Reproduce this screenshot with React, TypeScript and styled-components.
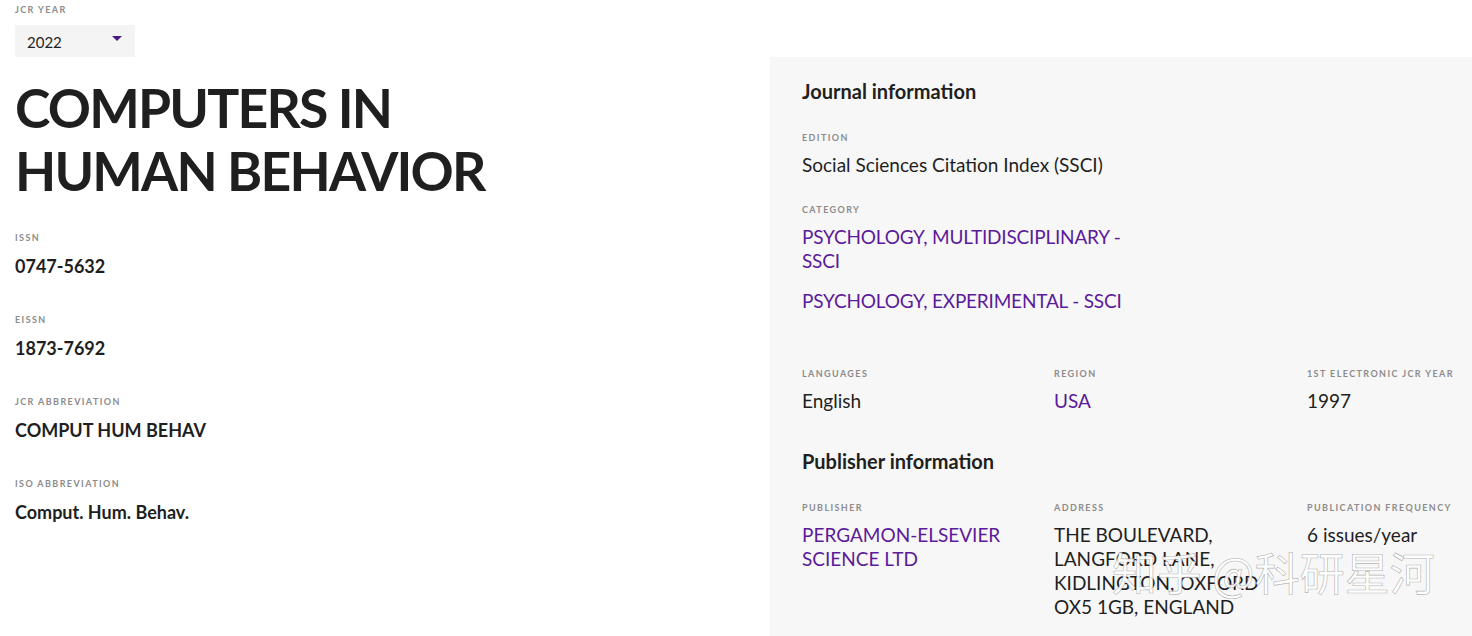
import React from "react";
import styled, { createGlobalStyle } from "styled-components";

const Global = createGlobalStyle`
  html, body { margin: 0; padding: 0; background: #fff; }
  body { font-family: Lato, "Noto Sans", sans-serif; color: #1f1f1f; }
  * { box-sizing: border-box; }
`;

const Page = styled.div`
  position: relative;
  display: grid;
  grid-template-columns: 770px 702px;
  width: 1472px;
  height: 636px;
  overflow: hidden;
`;

const Left = styled.div`
  padding: 4px 0 0 15px;
  display: flex;
  flex-direction: column;
`;

const Label = styled.div`
  font-size: 9px;
  font-weight: 700;
  letter-spacing: 1.4px;
  text-transform: uppercase;
  color: #8c8c8c;
  line-height: 12px;
`;

const Select = styled.div`
  margin-top: 9px;
  width: 120px;
  height: 32px;
  background: #f4f4f4;
  display: flex;
  align-items: center;
  justify-content: space-between;
  padding: 2px 13px 0 12px;
  font-size: 15px;
  color: #1f1f1f;
`;

const Caret = styled.span`
  width: 0;
  height: 0;
  border-left: 5px solid transparent;
  border-right: 5px solid transparent;
  border-top: 5px solid #4b1a8a;
  margin-top: -8px;
`;

const Title = styled.h1`
  margin: 19px 0 30px 0;
  font-size: 53.5px;
  line-height: 63px;
  font-weight: 700;
  letter-spacing: -1.8px;
  color: #1f1f1f;
`;

const Field = styled.div`
  display: flex;
  flex-direction: column;
  gap: 10px;
  margin-bottom: 36px;
`;

const BoldValue = styled.div`
  font-size: 18px;
  font-weight: 700;
  line-height: 24px;
  color: #1f1f1f;
`;

const Right = styled.div`
  margin-top: 57px;
  background: #f7f7f7;
  padding: 22px 16px 0 32px;
`;

const Heading = styled.h2`
  margin: 0;
  font-size: 20px;
  font-weight: 700;
  line-height: 24px;
  color: #1f1f1f;
`;

const Block = styled.div<{ $top: number; $gap?: number }>`
  display: flex;
  flex-direction: column;
  gap: ${(p) => p.$gap ?? 9}px;
  margin-top: ${(p) => p.$top}px;
`;

const Value = styled.div<{ $link?: boolean }>`
  font-size: 19px;
  line-height: 24px;
  color: ${(p) => (p.$link ? "#5b1b9a" : "#1f1f1f")};
  max-width: 340px;
`;

const Links = styled.div`
  display: flex;
  flex-direction: column;
  gap: 16px;
  letter-spacing: -0.2px;
`;

const Grid = styled.div<{ $top: number }>`
  display: grid;
  grid-template-columns: 252px 253px 1fr;
  margin-top: ${(p) => p.$top}px;
`;

const Cell = styled.div`
  display: flex;
  flex-direction: column;
  gap: 9px;
  max-width: 215px;
`;

const Watermark = styled.div`
  position: absolute;
  left: 1112px;
  top: 540px;
  font-family: "Noto Sans CJK SC", sans-serif;
  font-size: 45px;
  line-height: 64px;
  color: rgba(255, 255, 255, 0.92);
  -webkit-text-stroke: 0.6px rgba(110, 110, 110, 0.55);
  pointer-events: none;
`;

export default function App() {
  return (
    <>
      <Global />
      <Page>
        <Left>
          <Label>JCR YEAR</Label>
          <Select>
            <span>2022</span>
            <Caret />
          </Select>
          <Title>
            COMPUTERS IN
            <br />
            HUMAN BEHAVIOR
          </Title>
          <Field>
            <Label>ISSN</Label>
            <BoldValue>0747-5632</BoldValue>
          </Field>
          <Field>
            <Label>EISSN</Label>
            <BoldValue>1873-7692</BoldValue>
          </Field>
          <Field>
            <Label>JCR ABBREVIATION</Label>
            <BoldValue>COMPUT HUM BEHAV</BoldValue>
          </Field>
          <Field>
            <Label>ISO ABBREVIATION</Label>
            <BoldValue>Comput. Hum. Behav.</BoldValue>
          </Field>
        </Left>
        <Right>
          <Heading>Journal information</Heading>
          <Block $top={29}>
            <Label>EDITION</Label>
            <Value>Social Sciences Citation Index (SSCI)</Value>
          </Block>
          <Block $top={27}>
            <Label>CATEGORY</Label>
            <Links>
              <Value $link>PSYCHOLOGY, MULTIDISCIPLINARY - SSCI</Value>
              <Value $link>PSYCHOLOGY, EXPERIMENTAL - SSCI</Value>
            </Links>
          </Block>
          <Grid $top={55}>
            <Cell>
              <Label>LANGUAGES</Label>
              <Value>English</Value>
            </Cell>
            <Cell>
              <Label>REGION</Label>
              <Value $link>USA</Value>
            </Cell>
            <Cell>
              <Label>1ST ELECTRONIC JCR YEAR</Label>
              <Value>1997</Value>
            </Cell>
          </Grid>
          <Block $top={36}>
            <Heading>Publisher information</Heading>
          </Block>
          <Grid $top={29}>
            <Cell>
              <Label>PUBLISHER</Label>
              <Value $link>PERGAMON-ELSEVIER SCIENCE LTD</Value>
            </Cell>
            <Cell>
              <Label>ADDRESS</Label>
              <Value>THE BOULEVARD, LANGFORD LANE, KIDLINGTON, OXFORD OX5 1GB, ENGLAND</Value>
            </Cell>
            <Cell>
              <Label>PUBLICATION FREQUENCY</Label>
              <Value>6 issues/year</Value>
            </Cell>
          </Grid>
        </Right>
        <Watermark>知乎 @科研星河</Watermark>
      </Page>
    </>
  );
}
